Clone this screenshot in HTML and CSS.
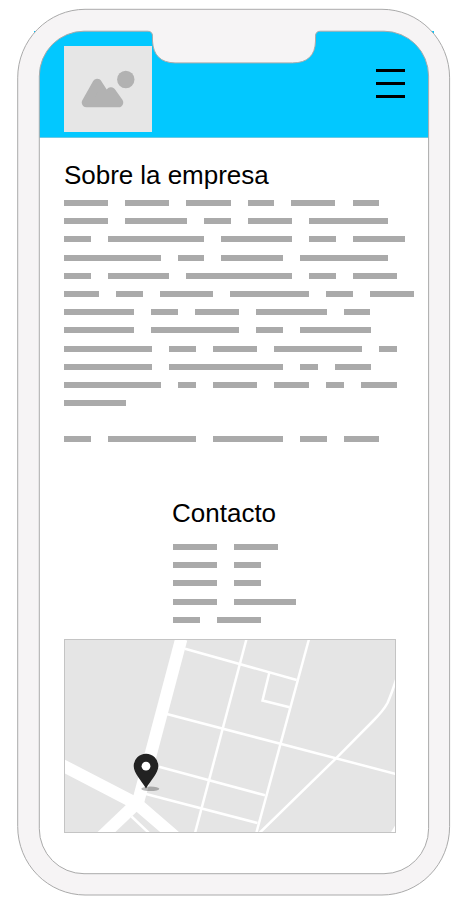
FILE: index.html
```html
<!DOCTYPE html>
<html lang="es">
<head>
<meta charset="utf-8">
<title>Sobre la empresa</title>
<link rel="stylesheet" href="styles.css">
</head>
<body>
<div class="phone">
  <header class="topbar">
    <svg class="logo" viewBox="0 0 88 86">
      <rect width="88" height="86" fill="#e6e6e6"/>
      <circle cx="61.8" cy="33.500" r="8.700" fill="#b2b2b2"/>
      <path d="M22.500 56.500 L33.200 37.500 L42.500 52 L47 46 L54.500 56.500Z" fill="#b2b2b2" stroke="#b2b2b2" stroke-width="9.600" stroke-linejoin="round"/>
    </svg>
    <div class="menu"><span></span><span></span><span></span></div>
  </header>
  <main class="content">
    <section class="about">
      <h1>Sobre la empresa</h1>
      <div class="lines">
        <p><i class="w5"></i><i class="w5"></i><i class="w5"></i><i class="w3"></i><i class="w5"></i><i class="w3"></i></p>
        <p><i class="w5"></i><i class="w7"></i><i class="w3"></i><i class="w5"></i><i class="w9"></i></p>
        <p><i class="w3"></i><i class="w11"></i><i class="w8"></i><i class="w3"></i><i class="w6"></i></p>
        <p><i class="w11"></i><i class="w3"></i><i class="w7"></i><i class="w10"></i></p>
        <p><i class="w3"></i><i class="w7"></i><i class="w12"></i><i class="w3"></i><i class="w5"></i></p>
        <p><i class="w4"></i><i class="w3"></i><i class="w6"></i><i class="w9"></i><i class="w3"></i><i class="w5"></i></p>
        <p><i class="w8"></i><i class="w3"></i><i class="w5"></i><i class="w8"></i><i class="w3"></i></p>
        <p><i class="w8"></i><i class="w10"></i><i class="w3"></i><i class="w8"></i></p>
        <p><i class="w10"></i><i class="w3"></i><i class="w5"></i><i class="w10"></i><i class="w2"></i></p>
        <p><i class="w10"></i><i class="w13"></i><i class="w2"></i><i class="w4"></i></p>
        <p><i class="w11"></i><i class="w2"></i><i class="w5"></i><i class="w4"></i><i class="w2"></i><i class="w4"></i></p>
        <p><i class="w7"></i></p>
        <p></p>
        <p><i class="w3"></i><i class="w10"></i><i class="w8"></i><i class="w3"></i><i class="w4"></i></p>
      </div>
    </section>
    <section class="contact">
      <h2>Contacto</h2>
      <div class="lines">
        <p><i class="w5"></i><i class="w5"></i></p>
        <p><i class="w5"></i><i class="w3"></i></p>
        <p><i class="w5"></i><i class="w3"></i></p>
        <p><i class="w5"></i><i class="w7"></i></p>
        <p><i class="w3"></i><i class="w5"></i></p>
      </div>
    </section>
    <svg class="map" viewBox="0 0 332 194">
      <rect width="332" height="194" fill="#e5e5e5"/>
      <g fill="none" stroke="#fff" stroke-width="12.300">
        <path d="M117.300 0 L73 167"/>
        <path d="M-6 124 L73 165 L116 202"/>
        <path d="M74 163 L32 203"/>
      </g>
      <g fill="none" stroke="#fff" stroke-width="2.500">
        <path d="M67.500 177.500 L86 195"/>
        <path d="M121 9.800 L232.700 41"/>
        <path d="M102.700 75 L332 135"/>
        <path d="M95 127.700 L201 156.300"/>
        <path d="M81 154.800 L193.500 184"/>
        <path d="M182.500 0 L131 194"/>
        <path d="M245 0 L192.300 194"/>
        <path d="M205.300 33.700 L198.500 61.500 L225.500 68.300"/>
        <path d="M195.500 194 L272 119.300 L309 82 Q319.500 71.500 323.500 64 Q327.500 55 332 41"/>
      </g>
      <path d="M326.500 194 L332 185 V194Z" fill="#fff"/>
      <rect x=".5" y=".5" width="331" height="193" fill="none" stroke="#c4c4c4"/>
      <ellipse cx="86.300" cy="149.800" rx="9" ry="2.300" fill="#000" fill-opacity=".27"/>
      <path d="M82 149.500 C77.500 141.500 69.700 134.500 69.700 127 A12.300 12.300 0 0 1 94.300 127 C94.300 134.500 86.500 141.500 82 149.500Z" fill="#222"/>
      <circle cx="82" cy="127.200" r="4.400" fill="#fff"/>
    </svg>
  </main>
  <svg class="frame" viewBox="0 0 464 910">
    <path fill="#f6f4f5" stroke="#aaa" stroke-width="1" fill-rule="evenodd" d="M85 9.300 H382 A67.500 68.500 0 0 1 449.600 77.800 V826.500 A67.500 68.500 0 0 1 382 895 H85 A67.500 68.500 0 0 1 17.700 826.500 V77.800 A67.500 68.500 0 0 1 85 9.300Z M84 31.200 A44.700 45 0 0 0 39.300 76.200 V828.700 A44.700 45 0 0 0 84 873.700 H384 A44.700 45 0 0 0 428.600 828.700 V76.200 A44.700 45 0 0 0 384 31.200 H320.500 Q315.500 31.200 315.500 36.200 V41 Q315 62.900 292.500 62.900 H175 Q153.500 62.500 152.500 41 V36.200 Q152.500 31.200 147.500 31.200Z"/>
  </svg>
</div>
</body>
</html>
```
FILE: styles.css
```css
* {
  box-sizing: border-box;
}

body {
  margin: 0;
  background: #fff;
  color: #000;
  font-family: "Liberation Sans", Arial, sans-serif;
}

.phone {
  position: relative;
  width: 464px;
  height: 910px;
  padding-top: 31px;
  overflow: hidden;
}

/* The device outline lies over the page content. */
.frame {
  position: absolute;
  inset: 0;
  width: 464px;
  height: 910px;
  pointer-events: none;
}

.topbar {
  display: flex;
  justify-content: space-between;
  align-items: flex-start;
  height: 106.500px;
  margin: 0 30px 0 34px;
  padding: 15px 29px 0 30px;
  background: #02c8ff;
  border-bottom: 1px solid #6cc9e4;
}

.logo {
  width: 88px;
  height: 86px;
}

.menu {
  display: flex;
  flex-direction: column;
  gap: 10px;
  width: 29px;
  margin-top: 23px;
}

.menu span {
  height: 3px;
  background: #000;
}

.content {
  display: flex;
  flex-direction: column;
  padding: 22.500px 0 0 64px;
}

h1,
h2 {
  margin: 0;
  font-size: 26px;
  font-weight: 400;
  line-height: 30px;
}

h1 {
  letter-spacing: -0.040px;
}

.lines {
  --u: 8.750px;
}

.lines p {
  display: flex;
  gap: calc(var(--u) * 2 - 0.400px);
  height: 18.1875px;
  margin: 0 0 0 -0.100px;
}

.lines i {
  height: 6px;
  width: calc(var(--u) * var(--n) + 0.400px);
  background: #aaa;
}

.w2 { --n: 2; }
.w3 { --n: 3; }
.w4 { --n: 4; }
.w5 { --n: 5; }
.w6 { --n: 6; }
.w7 { --n: 7; }
.w8 { --n: 8; }
.w9 { --n: 9; }
.w10 { --n: 10; }
.w11 { --n: 11; }
.w12 { --n: 12; }
.w13 { --n: 13; }

.about {
  height: 338px;
}

.about .lines {
  padding-top: 10.032px;
}

.contact {
  height: 141px;
  padding-left: 108px;
}

.contact .lines {
  padding: 16.032px 0 0 1px;
}

.map {
  display: block;
  width: 332px;
  height: 194px;
}
```
